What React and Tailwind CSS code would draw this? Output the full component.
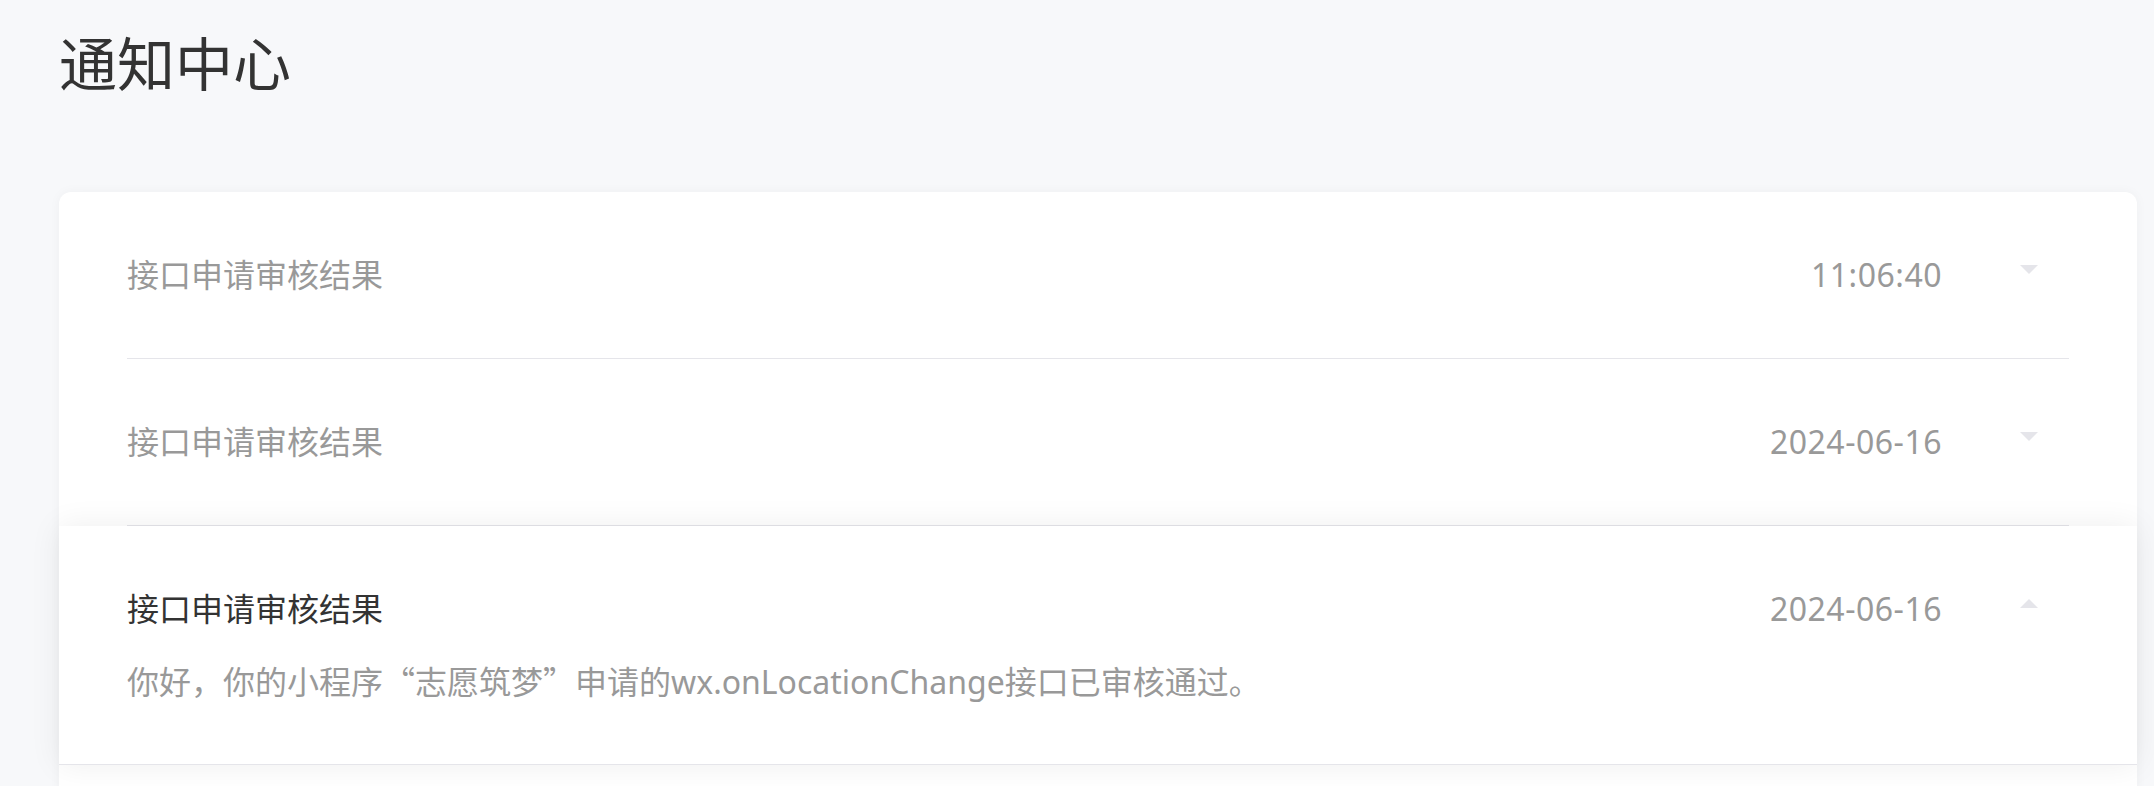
import React from "react";

const notices = [
  { title: "接口申请审核结果", time: "11:06:40", open: false },
  { title: "接口申请审核结果", time: "2024-06-16", open: false },
  {
    title: "接口申请审核结果",
    time: "2024-06-16",
    open: true,
    content: (
      <>
        你好，你的小程序<span className="font-['Noto_Sans_CJK_SC',sans-serif]">“</span>志愿筑梦
        <span className="font-['Noto_Sans_CJK_SC',sans-serif]">”</span>申请的wx.onLocationChange接口已审核通过。
      </>
    ),
  },
];

const Arrow = ({ up }) => (
  <div className="w-[18px] ml-[78px] mr-[31px] mb-[12px] shrink-0">
    <svg width="18" height="9" viewBox="0 0 18 9" className="block">
      {up ? (
        <polygon points="0,9 18,9 9,0" fill="#e5e5ea" />
      ) : (
        <polygon points="0,0 18,0 9,9" fill="#e5e5ea" />
      )}
    </svg>
  </div>
);

const NoticeRow = ({ item }) => {
  if (item.open) {
    return (
      <div className="relative z-10 bg-white shadow-[0_0_30px_rgba(0,0,0,0.07)] border-b border-[#e5e5ea]">
        <div className="mx-[68px] pt-[59px] pb-[58px]">
          <div className="flex items-center">
            <div className="flex-1 text-[#333333]">{item.title}</div>
            <div className="text-[#999999] tracking-[0.5px]">{item.time}</div>
            <Arrow up />
          </div>
          <p className="mt-[23px] text-[#999999]">{item.content}</p>
        </div>
      </div>
    );
  }
  return (
    <div className="mx-[68px] py-[59px] border-b border-[#e5e5ea] flex items-center">
      <div className="flex-1 text-[#999999]">{item.title}</div>
      <div className="text-[#999999] tracking-[0.5px]">{item.time}</div>
      <Arrow />
    </div>
  );
};

const App = () => {
  return (
    <div className="min-h-screen bg-[#f7f8fa] pl-[59px] pr-[17px] pt-[24px] pb-10 font-['Noto_Sans','Noto_Sans_CJK_SC',sans-serif]">
      <h1 className="text-[58px] leading-[80px] text-[#333333]">通知中心</h1>
      <div className="mt-[88px] bg-white rounded-xl shadow-[0_0_12px_rgba(0,0,0,0.04)] text-[32px] leading-[48px] pb-[80px]">
        {notices.map((n, i) => (
          <NoticeRow key={i} item={n} />
        ))}
      </div>
    </div>
  );
};

export default App;
